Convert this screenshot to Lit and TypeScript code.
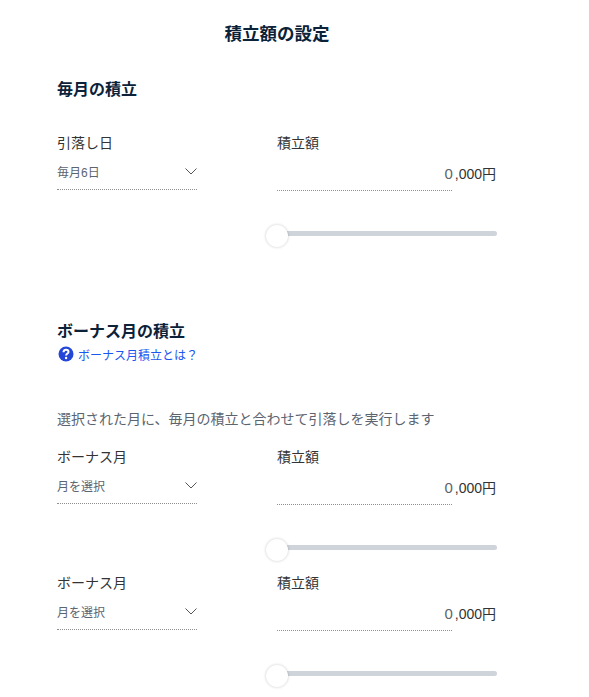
import { LitElement, html, css } from "lit";
import { customElement } from "lit/decorators.js";

@customElement("app-root")
export class AppRoot extends LitElement {
  static styles = css`
    :host {
      display: block;
      font-family: "Liberation Sans", "Noto Sans CJK JP", sans-serif;
      color: #333;
      background: #fff;
      height: 697px;
      overflow: hidden;
    }
    .wrap { width: 440px; margin-left: 57px; padding-top: 23px; }
    h1 { margin: 0; height: 23px; font-size: 17.5px; line-height: 23px; font-weight: 700; color: #0b2239; text-align: center; }
    h2 { margin: 0; height: 23px; font-size: 16px; line-height: 23px; font-weight: 700; color: #0b2239; }
    .monthly { margin-top: 32px; }
    .monthly .row { margin-top: 32px; }
    .bonus { margin-top: 84px; }
    .help { display: flex; align-items: center; gap: 4px; height: 18px; margin-top: 2px; margin-left: 1px; font-size: 12px; color: #1a56f0; }
    .help svg { width: 16px; height: 16px; display: block; }
    .desc { margin: 46px 0 0; height: 21px; font-size: 14px; line-height: 20px; color: #5c6470; }
    .bonus .row { margin-top: 17px; }
    .bonus .row + .row { margin-top: 23px; }
    .row { display: grid; grid-template-columns: 140px 220px; column-gap: 80px; }
    .label { font-size: 14px; line-height: 20px; height: 21px; color: #333; }
    .select {
      display: flex; justify-content: space-between; align-items: center;
      height: 36px; box-sizing: border-box; padding-bottom: 1px;
      border-bottom: 1px dotted #8f8f8f;
      font-size: 12px; color: #5c6470;
    }
    .select svg { width: 12px; height: 7px; display: block; margin-top: 1px; }
    .amount { display: flex; flex-direction: column; }
    .value { position: relative; height: 37px; box-sizing: border-box; }
    .line { height: 37px; width: 175px; box-sizing: border-box; border-bottom: 1px dotted #8f8f8f; }
    .num { position: absolute; right: 1px; top: 10px; font-size: 14px; line-height: 20px; color: #333; }
    .zero { color: #5c6470; font-size: 15px; margin-right: 2px; }
    .slider { position: relative; height: 5px; margin-top: 40px; background: #cfd3da; border-radius: 3px; }
    .knob {
      position: absolute; left: -11px; top: -6px; width: 22px; height: 22px; box-sizing: border-box;
      border-radius: 50%; background: #fff; box-shadow: 0 0 3px rgba(0, 0, 0, 0.22);
    }
  `;

  private row(label: string, sel: string) {
    return html`<div class="row">
      <div>
        <div class="label">${label}</div>
        <div class="select">
          <span>${sel}</span>
          <svg viewBox="0 0 12 7"><path d="M0.5 0.5 L6 6 L11.5 0.5" fill="none" stroke="#555" stroke-width="1"/></svg>
        </div>
      </div>
      <div class="amount">
        <div class="label">積立額</div>
        <div class="value">
          <div class="line"></div>
          <div class="num"><span class="zero">0</span>,000円</div>
        </div>
        <div class="slider"><div class="knob"></div></div>
      </div>
    </div>`;
  }

  render() {
    return html`<div class="wrap">
      <h1>積立額の設定</h1>
      <section class="monthly">
        <h2>毎月の積立</h2>
        ${this.row("引落し日", "毎月6日")}
      </section>
      <section class="bonus">
        <h2>ボーナス月の積立</h2>
        <div class="help">
          <svg viewBox="0 0 16 16">
            <circle cx="8" cy="8" r="7.5" fill="#2447d8"/>
            <path d="M5.5 6.2 C5.5 4.6 6.7 3.7 8 3.7 C9.4 3.7 10.5 4.6 10.5 5.9 C10.5 7.6 8.1 7.6 8.1 9.6" fill="none" stroke="#fff" stroke-width="2"/>
            <circle cx="8.1" cy="12" r="1.2" fill="#fff"/>
          </svg>
          <span>ボーナス月積立とは？</span>
        </div>
        <p class="desc">選択された月に、毎月の積立と合わせて引落しを実行します</p>
        ${this.row("ボーナス月", "月を選択")}
        ${this.row("ボーナス月", "月を選択")}
      </section>
    </div>`;
  }
}
